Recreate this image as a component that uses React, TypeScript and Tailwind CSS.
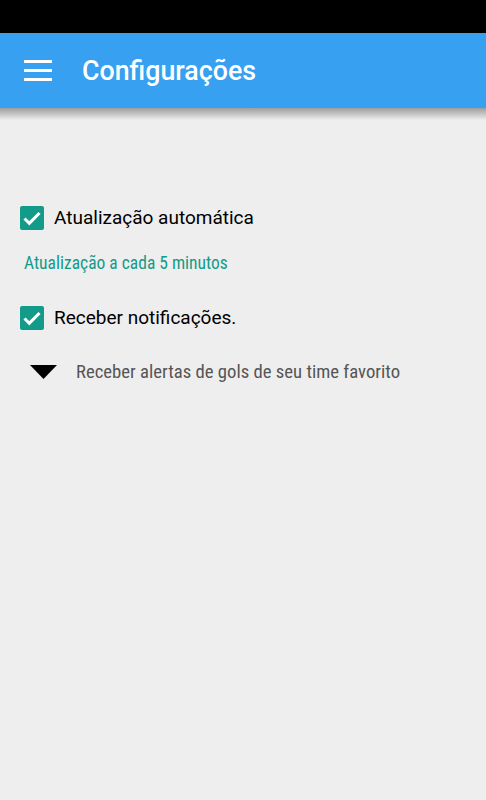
const Check = () => (
    <span className="flex h-6 w-6 shrink-0 items-center justify-center rounded-[2px] bg-[#129b89]">
        <svg viewBox="0 0 24 24" className="h-6 w-6" fill="none" stroke="white" strokeWidth={3}>
            <path d="M4.5 12.5l4.8 4.8L19.5 7" />
        </svg>
    </span>
);

export default function App() {
    return (
        <div className="flex min-h-[800px] flex-col bg-[#eeeeee] font-['Roboto',sans-serif]">
            <div className="h-[33px] bg-black" />
            <header className="relative flex h-[75px] items-center bg-[#37a0f1] pl-6">
                <svg viewBox="0 0 28 22" className="h-[22px] w-[28px]" fill="white">
                    <rect x="0" y="0" width="28" height="3" />
                    <rect x="0" y="9" width="28" height="3" />
                    <rect x="0" y="18" width="28" height="3" />
                </svg>
                <h1 className="ml-[30px] mt-[2px] text-[26.8px] font-medium text-white">Configurações</h1>
                <div className="absolute left-0 right-0 top-full h-3 bg-gradient-to-b from-[#9e9e9e] to-[#eeeeee]" />
            </header>

            <main className="flex flex-col pt-[98px]">
                <label className="flex items-center gap-[10px] px-5">
                    <Check />
                    <span className="text-[19px] leading-6 text-black">Atualização automática</span>
                </label>
                <p className="mt-[21px] px-6 text-[17.5px] leading-6 text-[#129b89] font-stretch-condensed">
                    Atualização a cada 5 minutos
                </p>
                <label className="mt-[31px] flex items-center gap-[10px] px-5">
                    <Check />
                    <span className="text-[19px] leading-6 text-black">Receber notificações.</span>
                </label>
                <div className="mt-[30px] flex items-center pl-[30px]">
                    <svg viewBox="0 0 27 14" className="h-[14px] w-[27px]">
                        <polygon points="0,0 27,0 13.5,14" fill="black" />
                    </svg>
                    <span className="ml-[19px] text-[18.7px] leading-6 text-[#555555] font-stretch-condensed">
                        Receber alertas de gols de seu time favorito
                    </span>
                </div>
            </main>
        </div>
    );
}
